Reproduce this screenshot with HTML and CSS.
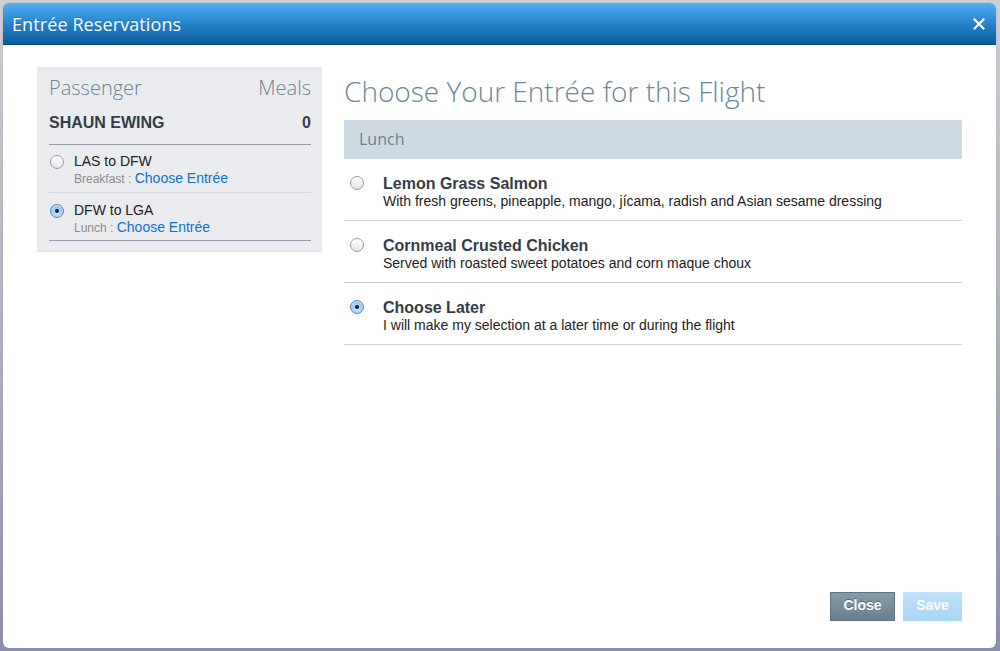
FILE: index.html
```html
<!DOCTYPE html>
<html>
<head>
<meta charset="utf-8">
<link rel="stylesheet" href="styles.css">
</head>
<body>
<div class="dialog">
  <div class="titlebar">
    <span class="title">Entrée Reservations</span>
    <span class="close-x">
      <svg width="12" height="12" viewBox="0 0 12 12"><path d="M1.5 1.5 L10.5 10.5 M10.5 1.5 L1.5 10.5" stroke="#fff" stroke-width="2" stroke-linecap="square"/></svg>
    </span>
  </div>
  <div class="content">
    <div class="sidebar">
      <div class="side-head"><span>Passenger</span><span>Meals</span></div>
      <div class="pax"><span>SHAUN EWING</span><span>0</span></div>
      <div class="legs">
        <div class="leg">
          <span class="radio"></span>
          <div class="leg-text">
            <div class="route">LAS to DFW</div>
            <div class="meal"><span class="meal-name">Breakfast : </span><a class="choose">Choose Entrée</a></div>
          </div>
        </div>
        <div class="leg">
          <span class="radio checked"></span>
          <div class="leg-text">
            <div class="route">DFW to LGA</div>
            <div class="meal"><span class="meal-name">Lunch : </span><a class="choose">Choose Entrée</a></div>
          </div>
        </div>
      </div>
    </div>
    <div class="main">
      <h1 class="heading">Choose Your Entrée for this Flight</h1>
      <div class="meal-bar">Lunch</div>
      <div class="option">
        <span class="radio"></span>
        <div class="opt-text">
          <div class="opt-title">Lemon Grass Salmon</div>
          <div class="opt-desc">With fresh greens, pineapple, mango, jícama, radish and Asian sesame dressing</div>
        </div>
      </div>
      <div class="option">
        <span class="radio"></span>
        <div class="opt-text">
          <div class="opt-title">Cornmeal Crusted Chicken</div>
          <div class="opt-desc">Served with roasted sweet potatoes and corn maque choux</div>
        </div>
      </div>
      <div class="option">
        <span class="radio checked"></span>
        <div class="opt-text">
          <div class="opt-title">Choose Later</div>
          <div class="opt-desc">I will make my selection at a later time or during the flight</div>
        </div>
      </div>
      <div class="actions">
        <button class="btn btn-close">Close</button>
        <button class="btn btn-save">Save</button>
      </div>
    </div>
  </div>
</div>
</body>
</html>
```

FILE: styles.css
```css
html, body {
  margin: 0;
  padding: 0;
}
body {
  width: 1000px;
  height: 651px;
  background: linear-gradient(#cfcfd2, #a9abbb 60%, #8c8fad);
  font-family: "Liberation Sans", Arial, sans-serif;
  overflow: hidden;
  padding: 3px 3px 0 3px;
  box-sizing: border-box;
}
.dialog {
  width: 993px;
  height: 645px;
  background: #fff;
  border-radius: 6px;
  overflow: hidden;
  display: flex;
  flex-direction: column;
  box-shadow: 0 0 1px #777;
}
.titlebar {
  height: 42px;
  flex: none;
  background: linear-gradient(#4fb0f2, #2a88d0 45%, #0b5c9c);
  border-bottom: 1px solid #074a80;
  box-sizing: border-box;
  display: flex;
  align-items: center;
  justify-content: space-between;
  padding: 0 11px 0 9px;
}
.title {
  color: #fff;
  font-family: "Open Sans", "DejaVu Sans", sans-serif;
  font-size: 18px;
  letter-spacing: 0.1px;
  text-shadow: 0 -1px 0 rgba(0,0,0,0.2);
}
.close-x {
  display: flex;
  align-items: center;
  margin-top: 1px;
}
.content {
  flex: 1;
  display: flex;
  padding: 22px 34px 27px 34px;
  gap: 22px;
}
.sidebar {
  width: 285px;
  height: 185px;
  flex: none;
  background: linear-gradient(#e3e5e9, #ebecef 8px, #eaebee);
  box-sizing: border-box;
  padding: 0 11px 0 12px;
  border-bottom: 1px solid #dfe0e3;
}
.side-head {
  display: flex;
  justify-content: space-between;
  font-family: "Open Sans", "DejaVu Sans", sans-serif;
  font-weight: 300;
  font-size: 20px;
  color: #6b8594;
  padding-top: 7px;
  height: 34px;
  box-sizing: border-box;
  line-height: 28px;
}
.pax {
  display: flex;
  justify-content: space-between;
  font-weight: bold;
  font-size: 16px;
  color: #333d48;
  padding-top: 14px;
  padding-bottom: 13px;
  border-bottom: 1px solid #9a9ea4;
  line-height: 16px;
}
.legs {
  border-bottom: 1px solid #9a9ea4;
}
.leg {
  display: flex;
  align-items: flex-start;
  gap: 10px;
  padding: 8px 0 5px 0;
  border-bottom: 1px solid #d6d8dc;
}
.leg:last-child {
  border-bottom: none;
  padding-top: 9px;
  padding-bottom: 4px;
}
.leg .radio {
  margin-top: 2px;
  margin-left: 1px;
}
.route {
  font-size: 14px;
  color: #222;
  line-height: 17px;
}
.meal {
  line-height: 16px;
}
.meal-name {
  font-size: 12px;
  color: #8b8b8b;
}
.choose {
  font-size: 14px;
  color: #1170cf;
}
.radio {
  width: 14px;
  height: 14px;
  border-radius: 50%;
  box-sizing: border-box;
  border: 1px solid #9c9c9c;
  background: linear-gradient(#ffffff, #e6e6e6);
  flex: none;
  position: relative;
  box-shadow: inset 0 1px 1px rgba(255,255,255,0.8);
}
.radio.checked {
  border-color: #5c87b5;
  background: radial-gradient(circle at 50% 70%, #cfe6fb, #8fc1ef 70%, #6aa3dc);
}
.radio.checked::after {
  content: "";
  position: absolute;
  left: 4px;
  top: 4px;
  width: 4px;
  height: 4px;
  border-radius: 50%;
  background: #1b1b1b;
}
.main {
  flex: 1;
  display: flex;
  flex-direction: column;
}
.heading {
  margin: 0;
  font-family: "Open Sans", "DejaVu Sans", sans-serif;
  font-weight: 300;
  font-size: 28px;
  color: #6a8798;
  line-height: 36px;
  padding-top: 6px;
  height: 53px;
  box-sizing: border-box;
}
.meal-bar {
  height: 39px;
  background: #cfdbe2;
  font-family: "Open Sans", "DejaVu Sans", sans-serif;
  font-size: 16px;
  color: #6c8291;
  line-height: 39px;
  padding-left: 15px;
}
.option {
  display: flex;
  align-items: flex-start;
  gap: 19px;
  padding: 16px 0 9px 6px;
  height: 62px;
  box-sizing: border-box;
  border-bottom: 1px solid #cfcfcf;
}
.option .radio {
  margin-top: 1px;
}
.opt-title {
  font-weight: bold;
  font-size: 16px;
  color: #333d48;
  line-height: 18px;
}
.opt-desc {
  font-size: 14px;
  color: #222;
  line-height: 16px;
}
.actions {
  margin-top: auto;
  display: flex;
  justify-content: flex-end;
  gap: 8px;
}
.btn {
  border: none;
  height: 29px;
  font-family: "Liberation Sans", Arial, sans-serif;
  font-weight: bold;
  font-size: 14px;
  line-height: 25px;
  color: #fff;
  padding: 0 0 2px 0;
  cursor: pointer;
}
.btn-close {
  width: 65px;
  background: linear-gradient(#889dab, #687e8d);
  border: 1px solid #5f7482;
  text-shadow: 0 -1px 0 rgba(0,0,0,0.35);
}
.btn-save {
  width: 59px;
  background: linear-gradient(#c0e2fb, #a9d5f6);
  text-shadow: 0 0 1px rgba(0,0,0,0.05);
}
```
